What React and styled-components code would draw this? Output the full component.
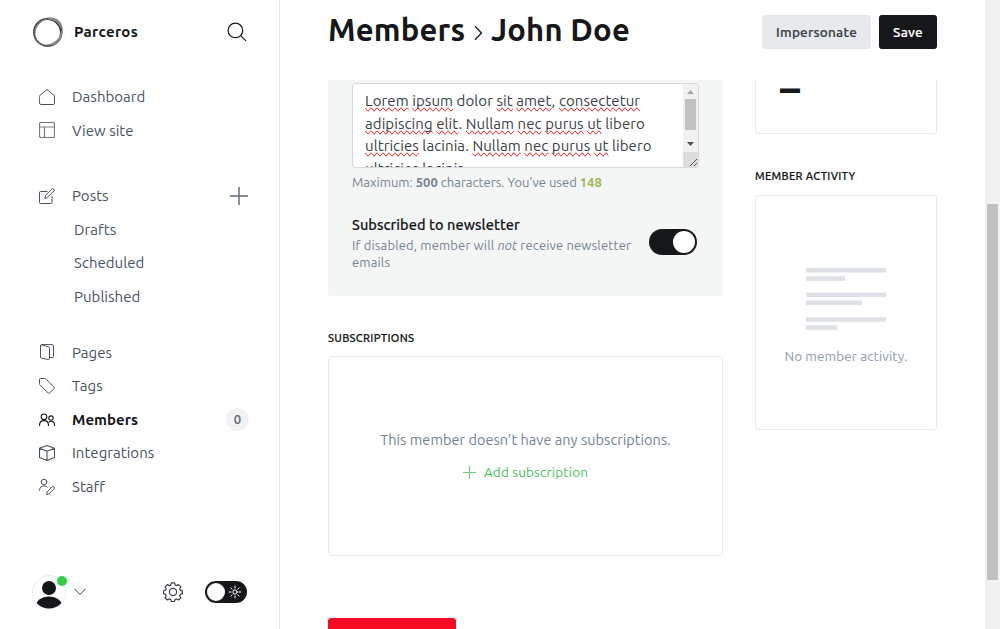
import React from 'react';
import styled, { createGlobalStyle } from 'styled-components';

const GlobalStyle = createGlobalStyle`
  *, *::before, *::after { box-sizing: border-box; }
  body {
    margin: 0;
    background: #fff;
    color: #15171a;
    font-family: "Ubuntu", "Noto Sans", "Open Sans", sans-serif;
    overflow: hidden;
  }
`;

const Page = styled.div`
  display: flex;
  width: 100%;
  height: 100vh;
  overflow: hidden;
`;

/* ---------- sidebar ---------- */

const Sidebar = styled.aside`
  display: flex;
  flex-direction: column;
  flex: none;
  width: 280px;
  height: 100%;
  border-right: 1px solid #e3e6e9;
`;

const SiteHeader = styled.header`
  display: flex;
  align-items: center;
  height: 64px;
  padding: 0 32px;
`;

const SiteName = styled.strong`
  flex: 1;
  margin: -1px 0 0 10px;
  font-size: 15px;
  font-weight: 700;
  letter-spacing: 0.35px;
`;

const NavArea = styled.nav`
  padding-top: 16px;
`;

const NavList = styled.ul`
  margin: 0 0 ${(p) => p.$after}px;
  padding: 0;
  list-style: none;
`;

const NavItem = styled.li`
  display: flex;
  align-items: center;
  height: 33.5px;
  padding: 0 30px 0 ${(p) => (p.$sub ? 74 : 39)}px;
  color: ${(p) => (p.$active ? '#15171a' : '#485260')};
  font-size: 15px;
  font-weight: ${(p) => (p.$active ? 700 : 400)};
  letter-spacing: 0.03px;
  white-space: nowrap;

  svg { flex: none; }
`;

const NavLabel = styled.span`
  flex: 1;
  margin-left: ${(p) => (p.$sub ? 0 : 17)}px;
`;

const AddPost = styled.span`
  display: flex;
  margin-right: 1px;
  color: #5d6774;
`;

const Count = styled.span`
  display: grid;
  place-items: center;
  width: 23px;
  height: 23px;
  border-radius: 50%;
  background: #f0f2f4;
  color: #5d6774;
  font-size: 13px;
  font-weight: 500;
  -webkit-text-stroke: 0.2px currentColor;
`;

const SidebarFooter = styled.footer`
  display: flex;
  align-items: center;
  height: 74px;
  margin-top: auto;
  padding: 0 32px;
`;

const Avatar = styled.div`
  position: relative;
  width: 34px;
  height: 34px;
  margin-right: 8px;

  svg { display: block; }
`;

const OnlineDot = styled.span`
  position: absolute;
  top: 1px;
  right: -1px;
  width: 10px;
  height: 10px;
  border-radius: 50%;
  background: #30cf43;
`;

const NightToggle = styled.span`
  display: flex;
  align-items: center;
  gap: 3px;
  width: 42px;
  height: 22px;
  margin-left: 22px;
  padding-left: 2px;
  border-radius: 11px;
  background: #15171a;

  i {
    width: 18px;
    height: 18px;
    border-radius: 50%;
    background: #fff;
  }
`;

const Spacer = styled.span`
  flex: 1;
`;

/* ---------- main ---------- */

const Main = styled.main`
  display: flex;
  flex-direction: column;
  flex: 1;
  min-width: 0;
  padding: 0 48px;
`;

const TopBar = styled.header`
  display: flex;
  align-items: center;
  flex: none;
  height: 80px;
  padding-bottom: 16px;
`;

const Title = styled.h1`
  display: flex;
  flex: 1;
  align-items: center;
  margin: -5px 0 0;
  font-size: 31px;
  font-weight: 700;
  letter-spacing: 0.2px;
  line-height: 40px;
  white-space: nowrap;

  svg { margin: 6px 8px 0 8.5px; }
`;

const Button = styled.button`
  height: 34px;
  width: ${(p) => p.$width}px;
  margin-left: 8px;
  padding: 0;
  border: 0;
  border-radius: 3px;
  background: ${(p) => (p.$primary ? '#15171a' : '#e6eaed')};
  color: ${(p) => (p.$primary ? '#fff' : '#394047')};
  font: 500 13.5px "Ubuntu", "Noto Sans", sans-serif;
  letter-spacing: 0.25px;
  -webkit-text-stroke: 0.2px currentColor;
`;

const Columns = styled.div`
  display: flex;
  flex: 1;
  gap: 32px;
  min-height: 0;
  overflow: hidden;
`;

const Primary = styled.div`
  width: 395px;
`;

const Secondary = styled.div`
  width: 182px;
`;

const FormPanel = styled.section`
  height: 216px;
  padding: 3px 24px 0;
  border-radius: 0 0 3px 3px;
  background: #f4f6f6;
`;

const NoteField = styled.div`
  display: flex;
  width: 347px;
  height: 85px;
  border: 1px solid #d6dadc;
  border-radius: 3px;
  background: #fff;
  overflow: hidden;
`;

const NoteText = styled.div`
  flex: 1;
  padding: 6px 0 0 12px;
  color: #394047;
  font-size: 15px;
  letter-spacing: 0.08px;
  line-height: 22.5px;
  white-space: nowrap;
`;

const Misspelt = styled.span`
  text-decoration-line: spelling-error;
`;

const NoteScroll = styled.div`
  display: flex;
  flex-direction: column;
  width: 15px;
  background: #f1f1f1;

  svg { display: block; }
`;

const NoteThumb = styled.span`
  width: 11px;
  height: 31px;
  margin: 0 2px;
  background: #c1c1c1;
`;

const Hint = styled.p`
  margin: 5px 0 0;
  color: #738393;
  font-size: 13px;
  line-height: 18px;
  white-space: nowrap;

  b { font-weight: 700; }
`;

const Used = styled.b`
  color: #9fbb58;
`;

const NewsletterRow = styled.div`
  display: flex;
  align-items: center;
  justify-content: space-between;
  width: 345px;
  margin-top: 23px;
`;

const NewsletterTitle = styled.h4`
  margin: 0;
  font-size: 14.5px;
  font-weight: 500;
  line-height: 22px;
  letter-spacing: 0.06px;
  -webkit-text-stroke: 0.15px currentColor;
`;

const NewsletterText = styled.p`
  margin: 1px 0 -1px;
  color: #738393;
  font-size: 13px;
  line-height: 17px;
  letter-spacing: 0.15px;
  white-space: nowrap;
`;

const Switch = styled.span`
  display: flex;
  align-items: center;
  justify-content: flex-end;
  width: 48px;
  height: 26px;
  padding-right: 2px;
  border-radius: 13px;
  background: #15171a;

  i {
    width: 22px;
    height: 22px;
    border-radius: 50%;
    background: #fff;
  }
`;

const SectionTitle = styled.h4`
  margin: ${(p) => p.$top}px 0 ${(p) => p.$bottom}px;
  font-size: 11px;
  font-weight: 500;
  line-height: 18px;
  letter-spacing: 0.3px;
  text-transform: uppercase;
  white-space: nowrap;
  -webkit-text-stroke: 0.2px currentColor;
`;

const Card = styled.section`
  display: flex;
  flex-direction: column;
  align-items: center;
  height: ${(p) => p.$height}px;
  padding-top: ${(p) => p.$pad}px;
  border: 1px solid #e9ecee;
  border-radius: 3px;
`;

const StatCard = styled.section`
  height: 54px;
  padding: 0 24px;
  border: 1px solid #e9ecee;
  border-top: 0;
  border-radius: 0 0 3px 3px;
`;

const StatValue = styled.div`
  font-size: 40px;
  font-weight: 700;
  line-height: 18px;
`;

const EmptyText = styled.p`
  margin: 0;
  color: #738393;
  font-size: 14.5px;
  line-height: 20px;
  letter-spacing: 0.04px;
  white-space: nowrap;
`;

const ActivityNote = styled(EmptyText)`
  margin-top: 16px;
  color: #8b9cae;
  font-size: 13.5px;
  letter-spacing: 0.08px;
`;

const AddLink = styled.a`
  display: flex;
  align-items: center;
  gap: 8px;
  margin-top: 12px;
  color: #45c25b;
  font-size: 13.5px;
  line-height: 20px;
  letter-spacing: 0.15px;
  white-space: nowrap;
`;

const DangerButton = styled.div`
  width: 128px;
  height: 34px;
  margin-top: 62px;
  border-radius: 3px;
  background: #f50b23;
`;

const PageScroll = styled.div`
  flex: none;
  width: 15px;
  padding: 204px 2px 0;
  background: #f1f1f1;
`;

const PageThumb = styled.div`
  height: 376px;
  background: #c1c1c1;
`;

/* ---------- icons ---------- */

const Glyph = ({ size = 16, box = size, children, width = 1, ...rest }) => (
  <svg
    width={size}
    height={size}
    viewBox={`0 0 ${box} ${box}`}
    fill="none"
    stroke="currentColor"
    strokeWidth={width}
    strokeLinecap="round"
    strokeLinejoin="round"
    {...rest}
  >
    {children}
  </svg>
);

const Logo = () => (
  <Glyph size={32}>
    <ellipse cx="15.3" cy="16.600" rx="13.400" ry="13.400" stroke="#333" strokeWidth="1.500" />
    <ellipse cx="16" cy="16.300" rx="14.200" ry="13" stroke="#666" strokeWidth="1.200" transform="rotate(-52 16 16)" />
    <ellipse cx="16.500" cy="16" rx="14.800" ry="12.400" stroke="#8a8a8a" strokeWidth="1.300" transform="rotate(-44 16 16)" />
    <ellipse cx="16" cy="16.200" rx="14.200" ry="13.600" stroke="#555" strokeWidth="1" transform="rotate(38 16 16)" />
    <path d="M17 2.600c5 .4 9.600 3 11.600 7.400M29.800 16c-.6 6-3.600 9.600-8 12" stroke="#8a8a8a" strokeWidth="2" />
  </Glyph>
);

const SearchIcon = () => (
  <Glyph size={20} width={1.2} color="#15171a">
    <circle cx="8.400" cy="8.400" r="7.300" />
    <path d="M13.700 13.700 18.700 18.700" />
  </Glyph>
);

const HomeIcon = () => (
  <Glyph>
    <path d="M.5 6.900 8 .600l7.500 6.300v7.300a1.300 1.300 0 0 1-1.300 1.300H1.800a1.300 1.300 0 0 1-1.300-1.300Z" />
  </Glyph>
);

const LayoutIcon = () => (
  <Glyph width={1.2} opacity="0.75">
    <rect x=".5" y=".5" width="15" height="15" rx="1.500" />
    <path d="M.5 5h15M5.500 5v10.500" />
  </Glyph>
);

const PostsIcon = () => (
  <Glyph>
    <path d="M8 3.500H1.700A1.200 1.200 0 0 0 .5 4.700v9.600a1.200 1.200 0 0 0 1.200 1.200h10.100a1.200 1.200 0 0 0 1.200-1.200V8.500" />
    <path d="m6 10 .600-2.700L12.800 1.100a1.300 1.300 0 0 1 2 1.900L8.600 9.300Z" />
  </Glyph>
);

const PlusIcon = ({ size }) => (
  <Glyph size={size} strokeLinecap="butt" width={size > 15 ? 1.4 : 0.8}>
    <path d={`M0 ${size / 2}H${size}M${size / 2} 0V${size}`} />
  </Glyph>
);

const PagesIcon = () => (
  <Glyph>
    <path d="M1.500 1.400v11.700c0 .5.300.900.800 1l7 1.400c.600.100 1.200-.3 1.200-.9V4c0-.5-.3-.9-.8-1.100L2.700.8C2 .600 1.500.8 1.500 1.400Z" />
    <path d="M2.400.6h10.800c.8 0 1.300.5 1.300 1.300v10.300c0 .8-.500 1.300-1.300 1.300H10.600" />
  </Glyph>
);

const TagIcon = () => (
  <Glyph>
    <path d="M.5 1.500v4.200c0 .4.100.7.400 1l8.500 8.500c.3.300.7.300 1 0l4.800-4.800c.3-.3.300-.700 0-1L6.800.9C6.500.600 6.200.5 5.800.5H1.500c-.6 0-1 .4-1 1Z" />
  </Glyph>
);

const MembersIcon = () => (
  <Glyph width={1.1}>
    <circle cx="5" cy="5.800" r="2.800" />
    <circle cx="12" cy="7.100" r="2.200" />
    <path d="M.5 14.500c0-2.900 1.900-4.900 4.500-4.900s4.500 2 4.500 4.900M10.200 11c.6-.5 1.200-.7 1.900-.7 2 0 3.400 1.700 3.400 4.200" />
  </Glyph>
);

const BoxIcon = () => (
  <Glyph width={1.1}>
    <path d="M8 .5 15.500 3.300v9.200L8 15.500.5 12.500V3.300ZM.5 3.300 8 6.200l7.500-2.900M8 6.200v9.300" />
  </Glyph>
);

const StaffIcon = () => (
  <Glyph overflow="visible">
    <circle cx="5" cy="4" r="2.800" />
    <path d="M.5 12.200c0-2.700 1.900-4.300 4.500-4.300 1.300 0 2.500.4 3.300 1.200M7.700 16.200l.5-2.400 4.900-4.900a1.200 1.200 0 0 1 1.900 1.800L10 15.700Z" />
  </Glyph>
);

const PersonIcon = () => (
  <svg width="34" height="34" viewBox="0 0 34 34">
    <clipPath id="avatar-clip"><circle cx="17" cy="17" r="16.500" /></clipPath>
    <circle cx="17" cy="17" r="16.500" fill="#fff" stroke="#e9ebed" />
    <g clipPath="url(#avatar-clip)" fill="#15171a">
      <circle cx="17" cy="13" r="7" />
      <ellipse cx="17" cy="32" rx="13.500" ry="10.500" />
    </g>
  </svg>
);

const ChevronDown = () => (
  <Glyph size={12} color="#394047">
    <path d="m.700 3 5.300 5.500L11.300 3" />
  </Glyph>
);

const ChevronRight = () => (
  <svg width="9" height="16" viewBox="0 0 9 16" fill="none" stroke="#15171a" strokeWidth="1.300">
    <path d="m1 1.200 6.500 6.800L1 14.800" />
  </svg>
);

const GearIcon = () => (
  <Glyph size={20} box={22} width={1.300} color="#394047">
    <circle cx="11" cy="11" r="4" />
    <path d="M9.200.9h3.600l.7 2.500 1.500.6 2.100-1.200 2.500 2.500-1.200 2.100.7 1.600 2.200.6v3.200l-2.300.8-.6 1.500 1.200 2.200-2.500 2.500-2.200-1.200-1.500.7-.8 2.200H9.300l-.7-2.200-1.600-.7-2.200 1.200-2.500-2.500 1.200-2.200-.6-1.500-2.300-.8V9.600l2.300-.6.6-1.600-1.200-2.100 2.500-2.500L7 4l1.500-.6Z" />
  </Glyph>
);

const SunIcon = () => (
  <Glyph size={14} color="#fff">
    <circle cx="7" cy="7" r="2.100" />
    <path d="M7 1.200v2M7 10.800v2M1.200 7h2M10.800 7h2M2.900 2.900l1.300 1.300M9.800 9.800l1.300 1.300M2.900 11.100l1.300-1.300M9.800 4.200l1.300-1.300" />
  </Glyph>
);

const ActivityLines = () => (
  <svg width="80" height="62" viewBox="0 0 80 62" fill="#dde1e5">
    <path d="M0 0h80v4.500H0zM0 8.300h39v4.400H0zM0 24.500h80V29H0zM0 32.600h56v4.500H0zM0 49.200h80v4.500H0zM0 57.200h31v4.500H0z" />
  </svg>
);

const ArrowUp = () => (
  <svg width="15" height="15" viewBox="0 0 15 15"><path d="M4 10h7L7.500 6Z" fill="#a3a3a3" /></svg>
);

const ArrowDown = () => (
  <svg width="15" height="16" viewBox="0 0 15 16"><path d="M4 6h7l-3.500 4Z" fill="#505050" /></svg>
);

const ResizeGrip = () => (
  <svg width="15" height="15" viewBox="0 0 15 15">
    <path d="M0 0h15v15H0z" fill="#dcdcdc" />
    <path d="m7 14 7-7M11 14l3-3" stroke="#555" strokeWidth="1" />
  </svg>
);

/* ---------- data ---------- */

const siteLinks = [
  { label: 'Dashboard', icon: <HomeIcon /> },
  { label: 'View site', icon: <LayoutIcon /> },
];

const postLinks = [
  { label: 'Posts', icon: <PostsIcon />, extra: <AddPost><PlusIcon size={18} /></AddPost> },
  { label: 'Drafts', sub: true },
  { label: 'Scheduled', sub: true },
  { label: 'Published', sub: true },
];

const manageLinks = [
  { label: 'Pages', icon: <PagesIcon /> },
  { label: 'Tags', icon: <TagIcon /> },
  { label: 'Members', icon: <MembersIcon />, active: true, extra: <Count>0</Count> },
  { label: 'Integrations', icon: <BoxIcon /> },
  { label: 'Staff', icon: <StaffIcon /> },
];

const noteLines = [
  '*Lorem *ipsum dolor *sit *amet, *consectetur',
  '*adipiscing *elit. *Nullam *nec *purus *ut libero',
  '*ultricies lacinia. *Nullam *nec *purus *ut libero',
  'ultricies lacinia.',
];

/* A leading asterisk marks a word the spelling checker underlines. */
const spell = (text) =>
  text.split(' ').map((word, i) => {
    const gap = i ? ' ' : '';
    if (!word.startsWith('*')) return gap + word;
    const [, body, tail] = word.match(/^\*(\w+)(.*)$/);
    return (
      <React.Fragment key={i}>
        {gap}<Misspelt>{body}</Misspelt>{tail}
      </React.Fragment>
    );
  });

const Nav = ({ items, after }) => (
  <NavList $after={after}>
    {items.map(({ label, icon, sub, active, extra }) => (
      <NavItem key={label} $sub={sub} $active={active}>
        {icon}
        <NavLabel $sub={sub}>{label}</NavLabel>
        {extra}
      </NavItem>
    ))}
  </NavList>
);

export default function App() {
  return (
    <Page>
      <GlobalStyle />
      <Sidebar>
        <SiteHeader>
          <Logo />
          <SiteName>Parceros</SiteName>
          <SearchIcon />
        </SiteHeader>
        <NavArea>
          <Nav items={siteLinks} after={32} />
          <Nav items={postLinks} after={22.5} />
          <Nav items={manageLinks} after={0} />
        </NavArea>
        <SidebarFooter>
          <Avatar>
            <PersonIcon />
            <OnlineDot />
          </Avatar>
          <ChevronDown />
          <Spacer />
          <GearIcon />
          <NightToggle><i /><SunIcon /></NightToggle>
        </SidebarFooter>
      </Sidebar>

      <Main>
        <TopBar>
          <Title>
            <span>Members</span>
            <ChevronRight />
            <span>John Doe</span>
          </Title>
          <Button $width={109}>Impersonate</Button>
          <Button $primary $width={58}>Save</Button>
        </TopBar>

        <Columns>
          <Primary>
            <FormPanel>
              <NoteField>
                <NoteText>
                  {noteLines.map((text) => (
                    <div key={text}>{spell(text)}</div>
                  ))}
                </NoteText>
                <NoteScroll>
                  <ArrowUp />
                  <NoteThumb />
                  <Spacer />
                  <ArrowDown />
                  <ResizeGrip />
                </NoteScroll>
              </NoteField>
              <Hint>
                Maximum: <b>500</b> characters. You’ve used <Used>148</Used>
              </Hint>
              <NewsletterRow>
                <div>
                  <NewsletterTitle>Subscribed to newsletter</NewsletterTitle>
                  <NewsletterText>
                    If disabled, member will <em>not</em> receive newsletter<br />emails
                  </NewsletterText>
                </div>
                <Switch><i /></Switch>
              </NewsletterRow>
            </FormPanel>

            <SectionTitle $top={32.5} $bottom={9.5}>Subscriptions</SectionTitle>
            <Card $height={200} $pad={73}>
              <EmptyText>This member doesn't have any subscriptions.</EmptyText>
              <AddLink><PlusIcon size={13} />Add subscription</AddLink>
            </Card>
            <DangerButton />
          </Primary>

          <Secondary>
            <StatCard><StatValue>–</StatValue></StatCard>
            <SectionTitle $top={33} $bottom={10}>Member activity</SectionTitle>
            <Card $height={235} $pad={72}>
              <ActivityLines />
              <ActivityNote>No member activity.</ActivityNote>
            </Card>
          </Secondary>
        </Columns>
      </Main>

      <PageScroll><PageThumb /></PageScroll>
    </Page>
  );
}
